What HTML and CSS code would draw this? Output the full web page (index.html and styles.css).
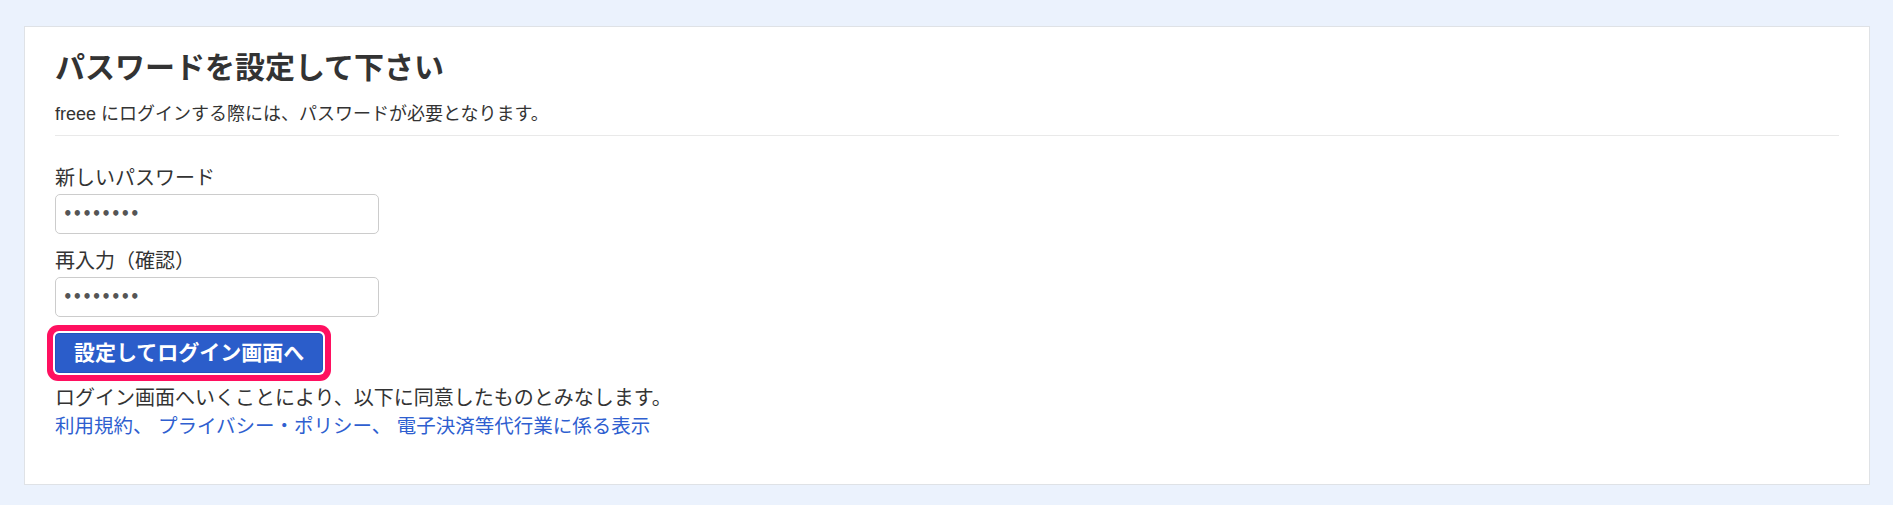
FILE: index.html
```html
<!DOCTYPE html>
<html lang="ja">
<head>
<meta charset="utf-8">
<title>パスワードを設定して下さい</title>
<link rel="stylesheet" href="styles.css">
</head>
<body>
<main class="card">
  <h1 class="title">パスワードを設定して下さい</h1>
  <p class="lead">freee にログインする際には、パスワードが必要となります。</p>
  <hr class="divider">
  <form class="form">
    <label class="field">
      <span class="label">新しいパスワード</span>
      <input class="input" type="password" value="password">
    </label>
    <label class="field field-second">
      <span class="label">再入力（確認）</span>
      <input class="input" type="password" value="password">
    </label>
    <div class="actions">
      <button type="button" class="btn">設定してログイン画面へ</button>
    </div>
  </form>
  <div class="agree">
    <p class="agree-text">ログイン画面へいくことにより、以下に同意したものとみなします。</p>
    <p class="agree-links"><a href="#" class="link">利用規約</a><span class="sep">、 </span><a href="#" class="link">プライバシー・ポリシー</a><span class="sep">、 </span><a href="#" class="link">電子決済等代行業に係る表示</a></p>
  </div>
</main>
</body>
</html>
```
FILE: styles.css
```css
html, body {
  margin: 0;
  padding: 0;
}
body {
  background: #ebf2fd;
  padding: 26px 23px 22px 24px;
  font-family: "Liberation Sans", "Noto Sans CJK JP", sans-serif;
  color: #333333;
}
.card {
  display: block;
  background: #ffffff;
  border: 1px solid #dfe2e6;
  padding: 21px 30px 44px 30px;
}
.title {
  margin: 0;
  font-size: 30px;
  line-height: 40px;
  font-weight: 700;
  color: #333333;
}
.lead {
  margin: 13px 0 0 0;
  font-size: 18px;
  line-height: 26px;
}
.divider {
  margin: 8px 0 0 0;
  border: 0;
  border-top: 1px solid #e9e9e9;
  height: 0;
}
.form {
  margin-top: 28px;
  display: flex;
  flex-direction: column;
}
.field {
  display: flex;
  flex-direction: column;
  align-items: flex-start;
}
.field-second {
  margin-top: 13px;
}
.label {
  font-size: 20px;
  line-height: 28px;
  color: #333333;
}
.input {
  margin-top: 2px;
  box-sizing: border-box;
  width: 324px;
  height: 40px;
  border: 1px solid #cccccc;
  border-radius: 5px;
  padding: 0 7px;
  font-size: 15px;
  font-weight: 700;
  color: #555555;
  background: #fff;
  font-family: "DejaVu Sans", sans-serif;
}
.actions {
  margin-top: 16px;
  display: flex;
}
.btn {
  box-sizing: border-box;
  height: 40px;
  padding: 0 18px;
  border: 1px solid #2254bd;
  border-radius: 4px;
  background: #2b5dca;
  color: #ffffff;
  font-family: "Liberation Sans", "Noto Sans CJK JP", sans-serif;
  font-size: 21px;
  font-weight: 700;
  line-height: 38px;
  box-shadow: 0 0 0 2px #ffffff, 0 0 0 8px #ff1060;
  cursor: pointer;
}
.agree {
  margin-top: 11px;
}
.agree-text,
.agree-links {
  margin: 0;
  font-size: 20px;
  line-height: 28px;
}
.agree-links {
  font-size: 19.5px;
}
.link {
  color: #2f5fd0;
  text-decoration: none;
}
.sep {
  color: #2f5fd0;
}
```
